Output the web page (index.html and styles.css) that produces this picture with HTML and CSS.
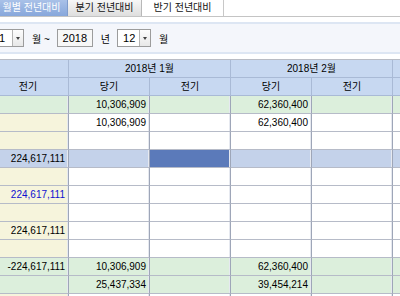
FILE: index.html
```html
<!DOCTYPE html>
<html lang="ko">
<head>
    <meta charset="UTF-8">
    <title>월별 전년대비</title>
    <link rel="stylesheet" href="styles.css">
</head>
<body>
    <div class="tabs">
        <div class="tab active">월별 전년대비</div>
        <div class="tab">분기 전년대비</div>
        <div class="tab plain">반기 전년대비</div>
    </div>

    <div class="toolbar">
        <div class="combo first"><span class="val">1</span><span class="btn"><i></i></span></div>
        <span class="lbl">월 ~</span>
        <div class="field">2018</div>
        <span class="lbl">년</span>
        <div class="combo"><span class="val">12</span><span class="btn"><i></i></span></div>
        <span class="lbl">월</span>
    </div>

    <div class="viewport">
    <div class="grid">
        <div class="row head">
            <div class="cell"></div>
            <div class="cell span2">2018년 1월</div>
            <div class="cell span2">2018년 2월</div>
            <div class="cell"></div>
        </div>
        <div class="row head">
            <div class="cell">전기</div>
            <div class="cell">당기</div>
            <div class="cell">전기</div>
            <div class="cell">당기</div>
            <div class="cell">전기</div>
            <div class="cell"></div>
        </div>

        <div class="row green">
            <div class="cell"></div>
            <div class="cell">10,306,909</div>
            <div class="cell"></div>
            <div class="cell">62,360,400</div>
            <div class="cell"></div>
            <div class="cell"></div>
        </div>
        <div class="row">
            <div class="cell"></div>
            <div class="cell">10,306,909</div>
            <div class="cell"></div>
            <div class="cell">62,360,400</div>
            <div class="cell"></div>
            <div class="cell"></div>
        </div>
        <div class="row">
            <div class="cell"></div><div class="cell"></div><div class="cell"></div>
            <div class="cell"></div><div class="cell"></div><div class="cell"></div>
        </div>
        <div class="row selected">
            <div class="cell">224,617,111</div>
            <div class="cell"></div>
            <div class="cell current"></div>
            <div class="cell"></div>
            <div class="cell"></div>
            <div class="cell"></div>
        </div>
        <div class="row">
            <div class="cell"></div><div class="cell"></div><div class="cell"></div>
            <div class="cell"></div><div class="cell"></div><div class="cell"></div>
        </div>
        <div class="row">
            <div class="cell blue">224,617,111</div>
            <div class="cell"></div><div class="cell"></div>
            <div class="cell"></div><div class="cell"></div><div class="cell"></div>
        </div>
        <div class="row">
            <div class="cell"></div><div class="cell"></div><div class="cell"></div>
            <div class="cell"></div><div class="cell"></div><div class="cell"></div>
        </div>
        <div class="row">
            <div class="cell">224,617,111</div>
            <div class="cell"></div><div class="cell"></div>
            <div class="cell"></div><div class="cell"></div><div class="cell"></div>
        </div>
        <div class="row">
            <div class="cell"></div><div class="cell"></div><div class="cell"></div>
            <div class="cell"></div><div class="cell"></div><div class="cell"></div>
        </div>
        <div class="row green">
            <div class="cell">-224,617,111</div>
            <div class="cell">10,306,909</div>
            <div class="cell"></div>
            <div class="cell">62,360,400</div>
            <div class="cell"></div>
            <div class="cell"></div>
        </div>
        <div class="row green">
            <div class="cell"></div>
            <div class="cell">25,437,334</div>
            <div class="cell"></div>
            <div class="cell">39,454,214</div>
            <div class="cell"></div>
            <div class="cell"></div>
        </div>
        <div class="row">
            <div class="cell"></div><div class="cell"></div><div class="cell"></div>
            <div class="cell"></div><div class="cell"></div><div class="cell"></div>
        </div>
    </div>
    </div>
</body>
</html>
```

FILE: styles.css
```css
html, body {
    margin: 0;
    padding: 0;
}
body {
    width: 400px;
    height: 296px;
    overflow: hidden;
    background: #fff;
    font-family: "Liberation Sans", "Noto Sans CJK KR", sans-serif;
    font-size: 10px;
    color: #000;
}

/* tabs */
.tabs {
    display: flex;
    height: 16px;
    border-bottom: 1px solid #c4c4c4;
}
.tab {
    box-sizing: border-box;
    width: 74px;
    height: 16px;
    line-height: 16px;
    text-align: center;
    border-right: 1px solid #b8b8b8;
    background: linear-gradient(#f7f7f7, #dedede);
    color: #111;
}
.tab.active {
    width: 68px;
    padding-right: 4px;
    background: linear-gradient(#a9c1e8, #87a7db);
    border-right: 1px solid #7f9ccc;
    color: #fff;
}
.tab.plain {
    width: 82px;
    background: #fff;
    border-right: 1px solid #c8c8c8;
}

/* search bar */
.toolbar {
    box-sizing: border-box;
    height: 32px;
    margin-top: 5px;
    border-top: 2px solid #dde6f3;
    border-bottom: 2px solid #dde6f3;
    background: #f4f6fb;
    display: flex;
    align-items: center;
    margin-left: -7px;
    overflow: hidden;
}
.combo {
    box-sizing: border-box;
    flex: none;
    width: 34px;
    height: 18px;
    display: flex;
    border: 1px solid #9c9c9c;
    background: #fff;
}
.combo.first {
    width: 31px;
}
.combo .val {
    flex: 1;
    line-height: 16px;
    padding-left: 5px;
    font-size: 11px;
}
.combo .btn {
    width: 10px;
    border-left: 1px solid #b4b4b4;
    background: linear-gradient(#fdfdfd, #e8e8e8);
    display: flex;
    align-items: center;
    justify-content: center;
}
.combo .btn i {
    width: 0;
    height: 0;
    border-top: 3px solid #444;
    border-left: 2px solid transparent;
    border-right: 2px solid transparent;
}
.lbl {
    margin: 0 7px 0 8px;
    font-size: 10px;
}
.field {
    box-sizing: border-box;
    flex: none;
    width: 36px;
    height: 18px;
    line-height: 16px;
    text-align: center;
    border: 1px solid #9c9c9c;
    background: #f7f7f7;
    font-size: 11px;
}

/* grid */
.viewport {
    width: 400px;
    height: 240px;
    margin-top: 5px;
    overflow: hidden;
}
.grid {
    margin-left: -12px;
    border-top: 1px solid #b9bcc4;
}
.row {
    display: grid;
    grid-template-columns: repeat(6, 81px);
}
.cell {
    box-sizing: border-box;
    height: 18px;
    line-height: 17px;
    padding-right: 3px;
    text-align: right;
    white-space: nowrap;
    overflow: hidden;
    border-right: 1px solid #9ea6b8;
    border-bottom: 1px solid #b6bbc8;
    box-shadow: inset -1px 0 0 #e6e9f0;
}
.cell.span2 {
    grid-column: span 2;
}
.head .cell {
    text-align: center;
    padding-right: 0;
    background: #c7d8f1;
    border-right-color: #a9bad6;
    border-bottom-color: #a9bad6;
    box-shadow: none;
}
.row .cell:first-child {
    background: #f6f4dc;
}
.head .cell:first-child {
    background: #c7d8f1;
}
.green .cell,
.green .cell:first-child {
    background: #dcefdc;
}
.selected .cell,
.selected .cell:first-child {
    background: #c4d2ea;
}
.selected .cell.current {
    background: #5b7aba;
}
.cell.blue {
    color: #1010d0;
}
```
